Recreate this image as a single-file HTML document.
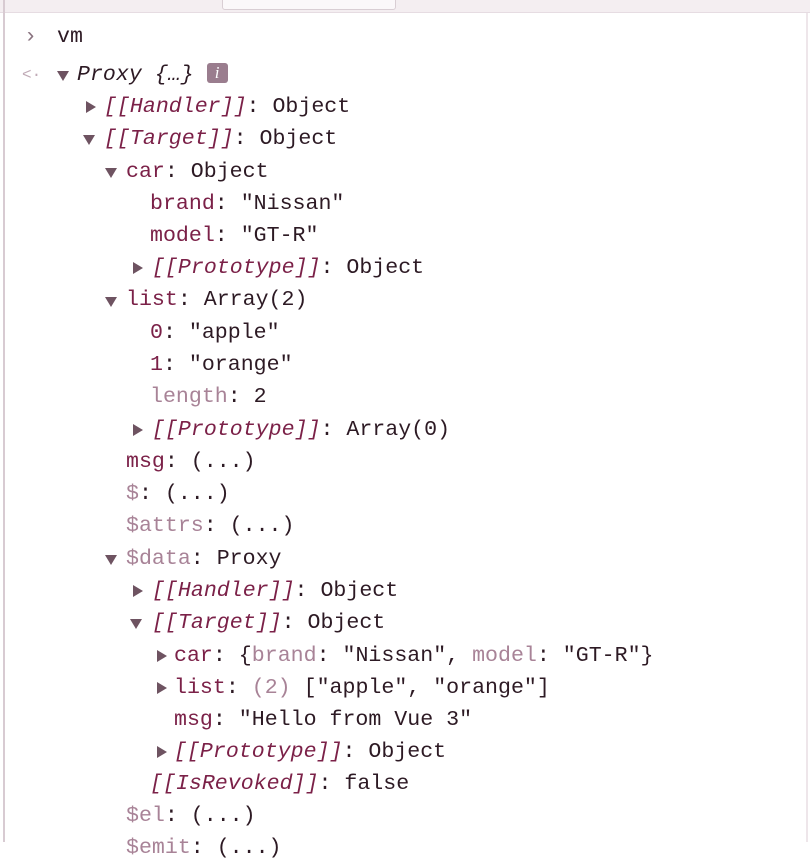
<!DOCTYPE html>
<html><head><meta charset="utf-8"><style>
body{margin:0;width:810px;height:842px;background:#fff;overflow:hidden;position:relative;font-family:"Liberation Mono",monospace;font-size:21.6px;color:#2d1a24}
.top{position:absolute;left:0;top:0;width:810px;height:12px;background:#f4eef1;border-bottom:1px solid #e6dce2}
.box{position:absolute;left:222px;top:-4px;width:172px;height:12px;border:1px solid #d9ced4;border-radius:3px;background:#fbf8fa}
.lb{position:absolute;left:3px;top:0;width:2px;height:842px;background:#d8cbd2}
.rb{position:absolute;left:806px;top:13px;width:2px;height:829px;background:#eee6ea}
.w{position:absolute;left:0;top:2px;width:810px;height:842px}
.r{position:absolute;white-space:pre;line-height:32px;height:32px}
.k{color:#7b2148}
.d{color:#a88397}
i{font-style:italic}
.t{position:absolute;width:0;height:0}
.dn{border-left:6px solid transparent;border-right:6px solid transparent;border-top:10px solid #6e5361}
.rt{border-top:6px solid transparent;border-bottom:6px solid transparent;border-left:10px solid #6e5361}
.info{display:inline-block;width:21px;height:20px;background:#9a7d8e;border-radius:3px;color:#fff;font-family:"Liberation Serif",serif;font-style:italic;font-size:17px;line-height:20px;text-align:center;vertical-align:2px}
</style></head><body>
<div class="top"></div><div class="box"></div><div class="lb"></div><div class="rb"></div>
<div class="w">
<div class="r" style="left:24px;top:19px;color:#8a7480">›</div>
<div class="r" style="left:57px;top:19px">vm</div>
<div class="r" style="left:22px;top:57px;color:#c0aab6;font-size:16px">&lt;·</div>
<div class="t dn" style="left:57px;top:69px"></div>
<div class="r" style="left:77px;top:57px"><i>Proxy {…}</i> <span class="info">i</span></div>

<div class="t rt" style="left:86px;top:99px"></div>
<div class="r" style="left:104px;top:89px"><i class="k">[[Handler]]</i>: Object</div>
<div class="t dn" style="left:83px;top:133px"></div>
<div class="r" style="left:104px;top:121px"><i class="k">[[Target]]</i>: Object</div>
<div class="t dn" style="left:105px;top:166px"></div>
<div class="r" style="left:126px;top:154px"><span class="k">car</span>: Object</div>
<div class="r" style="left:150px;top:186px"><span class="k">brand</span>: "Nissan"</div>
<div class="r" style="left:150px;top:218px"><span class="k">model</span>: "GT-R"</div>
<div class="t rt" style="left:133px;top:260px"></div>
<div class="r" style="left:152px;top:250px"><i class="k">[[Prototype]]</i>: Object</div>
<div class="t dn" style="left:105px;top:295px"></div>
<div class="r" style="left:126px;top:282px"><span class="k">list</span>: Array(2)</div>
<div class="r" style="left:150px;top:315px"><span class="k">0</span>: "apple"</div>
<div class="r" style="left:150px;top:347px"><span class="k">1</span>: "orange"</div>
<div class="r" style="left:150px;top:379px"><span class="d">length</span>: 2</div>
<div class="t rt" style="left:133px;top:422px"></div>
<div class="r" style="left:152px;top:412px"><i class="k">[[Prototype]]</i>: Array(0)</div>
<div class="r" style="left:126px;top:444px"><span class="k">msg</span>: (...)</div>
<div class="r" style="left:126px;top:476px"><span class="d">$</span>: (...)</div>
<div class="r" style="left:126px;top:508px"><span class="d">$attrs</span>: (...)</div>
<div class="t dn" style="left:105px;top:553px"></div>
<div class="r" style="left:126px;top:541px"><span class="d">$data</span>: Proxy</div>
<div class="t rt" style="left:133px;top:583px"></div>
<div class="r" style="left:152px;top:573px"><i class="k">[[Handler]]</i>: Object</div>
<div class="t dn" style="left:130px;top:617px"></div>
<div class="r" style="left:152px;top:605px"><i class="k">[[Target]]</i>: Object</div>
<div class="t rt" style="left:157px;top:648px"></div>
<div class="r" style="left:174px;top:638px"><span class="k">car</span>: {<span class="d">brand</span>: "Nissan", <span class="d">model</span>: "GT-R"}</div>
<div class="t rt" style="left:157px;top:680px"></div>
<div class="r" style="left:174px;top:670px"><span class="k">list</span>: <span class="d">(2)</span> ["apple", "orange"]</div>
<div class="r" style="left:174px;top:702px"><span class="k">msg</span>: "Hello from Vue 3"</div>
<div class="t rt" style="left:157px;top:744px"></div>
<div class="r" style="left:174px;top:734px"><i class="k">[[Prototype]]</i>: Object</div>
<div class="r" style="left:150px;top:766px"><i class="k">[[IsRevoked]]</i>: false</div>
<div class="r" style="left:126px;top:798px"><span class="d">$el</span>: (...)</div>
<div class="r" style="left:126px;top:830px"><span class="d">$emit</span>: (...)</div>
</div>
</body></html>
